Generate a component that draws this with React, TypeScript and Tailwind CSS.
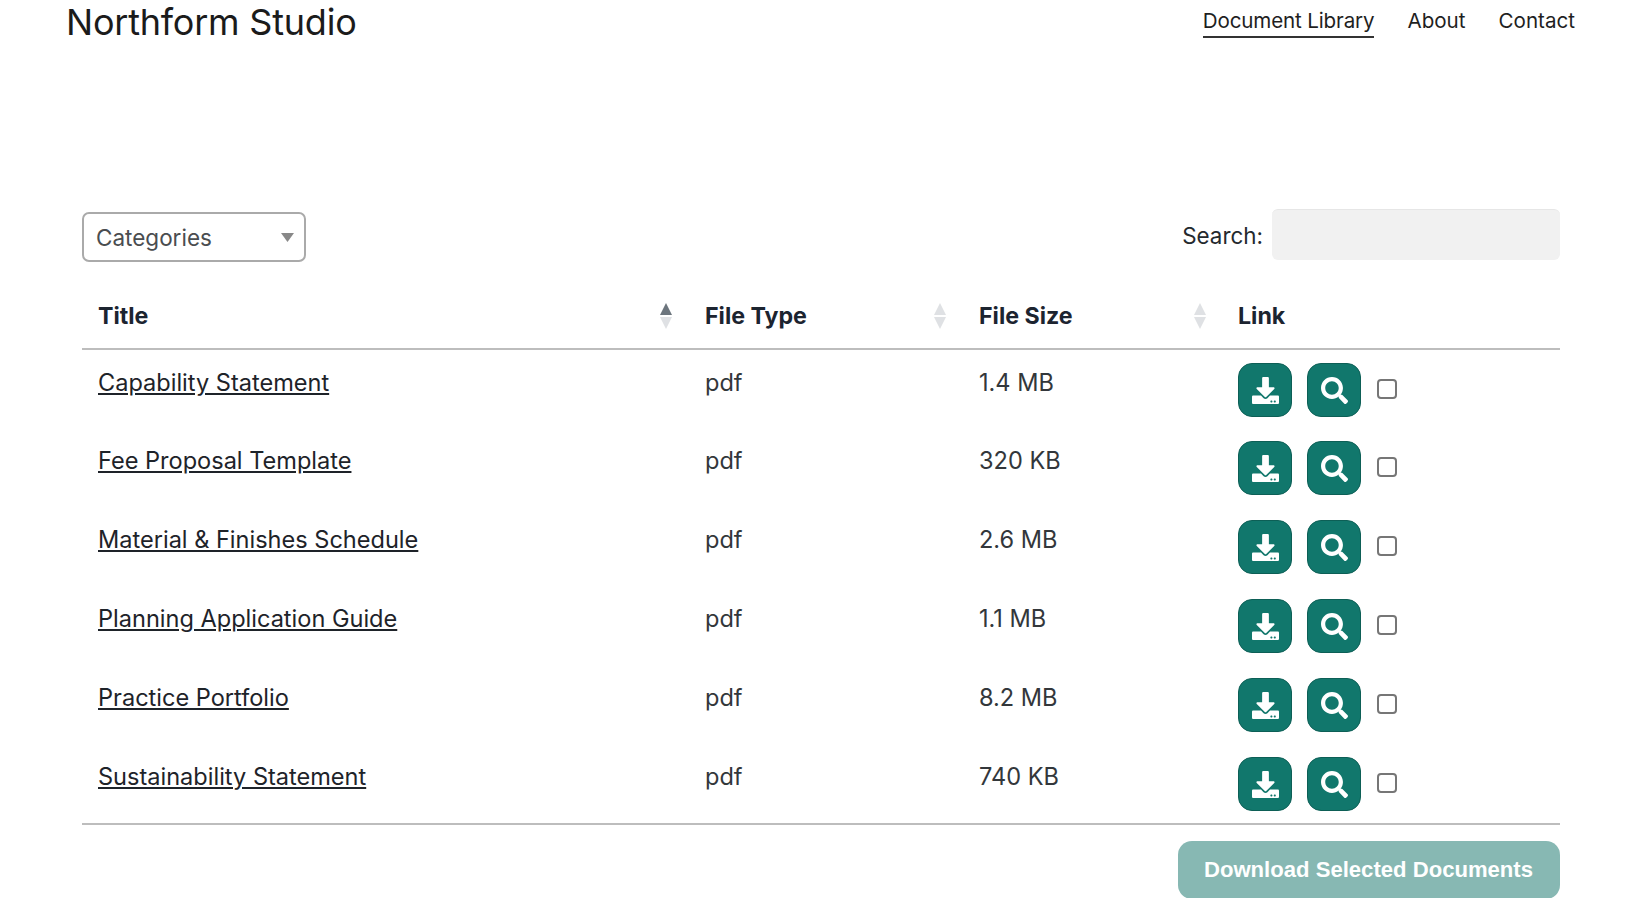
import { FaDownload, FaSearch } from 'react-icons/fa';

const documents = [
  { title: 'Capability Statement', type: 'pdf', size: '1.4 MB' },
  { title: 'Fee Proposal Template', type: 'pdf', size: '320 KB' },
  { title: 'Material & Finishes Schedule', type: 'pdf', size: '2.6 MB' },
  { title: 'Planning Application Guide', type: 'pdf', size: '1.1 MB' },
  { title: 'Practice Portfolio', type: 'pdf', size: '8.2 MB' },
  { title: 'Sustainability Statement', type: 'pdf', size: '740 KB' },
];

const SortIcon = ({ active = false }: { active?: boolean }) => (
  <svg width="12" height="26" viewBox="0 0 12 26" className="shrink-0">
    <path d="M6 0 L12 12 H0 Z" fill={active ? '#6c757d' : '#dfe1e4'} />
    <path d="M0 14 H12 L6 26 Z" fill="#dfe1e4" />
  </svg>
);

const IconButton = ({ children }: { children: React.ReactNode }) => (
  <button className="flex h-[54px] w-[54px] items-center justify-center rounded-[14px] border border-[#0d5f56] bg-[#11776c] text-white">
    {children}
  </button>
);

export default function App() {
  return (
    <div className="h-[898px] overflow-hidden bg-white font-['Inter',sans-serif] text-[#33373b]">
      <header className="flex h-[209px] items-start justify-between pl-[66px] pr-[65px]">
        <h1 className="text-[36px] leading-[45px] font-normal tracking-[-0.22px] text-[#1b1b1b]">Northform Studio</h1>
        <nav className="flex gap-[33px] pt-[6px] text-[20.6px] leading-[30px] text-[#1f1f1f]">
          <a className="h-[32px] border-b-2 border-[#333] tracking-[-0.15px]">Document Library</a>
          <a>About</a>
          <a>Contact</a>
        </nav>
      </header>

      <main className="mx-[82px] mr-[80px]">
        <div className="flex items-start justify-between">
          <button className="mt-[3px] flex h-[50px] w-[224px] items-center justify-between rounded-[7px] border-2 border-[#aaa] pl-[12px] pr-[10px] pt-[1px] text-[22.5px] text-[#4a4d50]">
            <span>Categories</span>
            <svg width="13" height="9" viewBox="0 0 13 9"><path d="M0 0 H13 L6.5 9 Z" fill="#888" /></svg>
          </button>
          <div className="flex items-center gap-[9px]">
            <label className="pt-[3px] text-[22.4px] text-[#24292e]">Search:</label>
            <input className="h-[51px] w-[288px] rounded-[6px] border-t border-[#e6e6e6] bg-[#f1f1f1]" />
          </div>
        </div>

        <table className="mt-[27px] w-full table-fixed border-collapse">
          <thead>
            <tr className="border-b-2 border-[#bdbdbd] text-left text-[23.2px] text-[#1c2430]">
              <th className="h-[60px] w-[608px] pb-[5px] pl-[16px] font-bold">
                <div className="flex items-center justify-between pr-[18px]">Title<SortIcon active /></div>
              </th>
              <th className="w-[273px] pb-[5px] pl-[15px] font-bold">
                <div className="flex items-center justify-between pr-[17px]">File Type<SortIcon /></div>
              </th>
              <th className="w-[259px] pb-[5px] pl-[16px] font-bold">
                <div className="flex items-center justify-between pr-[16px]">File Size<SortIcon /></div>
              </th>
              <th className="pb-[5px] pl-[16px] font-bold">Link</th>
            </tr>
          </thead>
          <tbody className="border-b-2 border-[#bdbdbd]">
            {documents.map((doc) => (
              <tr key={doc.title} className="h-[79px] align-top text-[23.55px] leading-[36px] last:h-[80px]">
                <td className="pl-[16px] pt-[15px]">
                  <a className="text-[#1e2329] underline underline-offset-2">{doc.title}</a>
                </td>
                <td className="pl-[15px] pt-[15px]">{doc.type}</td>
                <td className="pl-[16px] pt-[15px]">{doc.size}</td>
                <td className="pl-[16px] pt-[13px]">
                  <div className="flex items-center gap-[15px]">
                    <IconButton><FaDownload className="h-[27px] w-[27px]" /></IconButton>
                    <IconButton><FaSearch className="h-[27px] w-[27px]" /></IconButton>
                    <input type="checkbox" className="mb-[2px] ml-[1px] h-[20px] w-[20px] appearance-none rounded-[4px] border-2 border-[#767676] bg-white" />
                  </div>
                </td>
              </tr>
            ))}
          </tbody>
        </table>

        <div className="mt-[16px] flex justify-end">
          <button className="h-[58px] w-[382px] rounded-[14px] bg-[#87b8b3] pb-[1px] pr-[1px] font-['Liberation_Sans',sans-serif] text-[22.1px] font-bold text-white">
            Download Selected Documents
          </button>
        </div>
      </main>
    </div>
  );
}
